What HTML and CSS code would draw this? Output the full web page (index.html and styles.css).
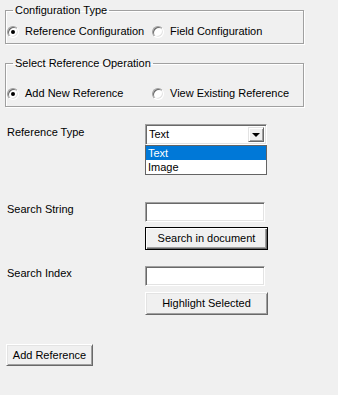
FILE: index.html
```html
<!DOCTYPE html>
<html lang="en">

<head>
    <link rel="stylesheet" href="styles.css">
</head>

<body>
    <fieldset class="group group-config">
        <legend>Configuration Type</legend>
        <div class="radio-row">
            <label class="radio-item wide"><span class="radio checked"></span>Reference Configuration</label>
            <label class="radio-item"><span class="radio"></span>Field Configuration</label>
        </div>
    </fieldset>

    <fieldset class="group group-operation">
        <legend>Select Reference Operation</legend>
        <div class="radio-row">
            <label class="radio-item wide"><span class="radio checked"></span>Add New Reference</label>
            <label class="radio-item"><span class="radio"></span>View Existing Reference</label>
        </div>
    </fieldset>

    <div class="form">
        <div class="form-row row-type">
            <span class="field-label">Reference Type</span>
            <div class="combo">
                <span class="combo-value">Text</span>
                <span class="combo-arrow"></span>
                <ul class="combo-list">
                    <li class="selected">Text</li>
                    <li>Image</li>
                </ul>
            </div>
        </div>

        <div class="form-row row-search">
            <span class="field-label">Search String</span>
            <div class="controls">
                <div class="textbox"></div>
                <button class="btn btn-default">Search in document</button>
            </div>
        </div>

        <div class="form-row row-index">
            <span class="field-label">Search Index</span>
            <div class="controls">
                <div class="textbox"></div>
                <button class="btn">Highlight Selected</button>
            </div>
        </div>

        <button class="btn btn-add">Add Reference</button>
    </div>
</body>

</html>
```

FILE: styles.css
```css
body {
    margin: 0;
    padding: 0;
    width: 338px;
    height: 395px;
    background-color: #f0f0f0;
    font-family: "Liberation Sans", Arial, sans-serif;
    font-size: 11px;
    line-height: 13px;
    color: #000;
    overflow: hidden;
}

.group {
    box-sizing: border-box;
    width: 299px;
    min-width: 0;
    margin: 0 0 0 5px;
    border: 1px solid #a0a0a0;
    box-shadow: 1px 1px 0 #fff, inset 1px 1px 0 #fff;
}

.group legend {
    margin-left: 6px;
    padding: 0 2px;
    line-height: 13px;
}

.group-config {
    margin-top: 4px;
    padding: 8px 0 5px 1px;
}

.group-operation {
    margin-top: 13px;
    padding: 17px 0 6px 1px;
}

.radio-row {
    display: flex;
}

.radio-item {
    display: flex;
    align-items: center;
    height: 13px;
}

.radio-item.wide {
    width: 145px;
}

.radio {
    position: relative;
    box-sizing: border-box;
    width: 12px;
    height: 12px;
    margin-right: 6px;
    border-radius: 50%;
    background-color: #fff;
    border: 1px solid;
    border-color: #a0a0a0 #fff #fff #a0a0a0;
    box-shadow: inset 1px 1px 0 #696969, inset -1px -1px 0 #e3e3e3;
}

.radio.checked::after {
    content: "";
    position: absolute;
    left: 3px;
    top: 3px;
    width: 4px;
    height: 4px;
    border-radius: 50%;
    background-color: #000;
}

.form {
    margin: 17px 0 0 7px;
}

.form-row {
    display: grid;
    grid-template-columns: 138px 123px;
}

.row-type .field-label {
    padding-top: 2px;
}

.row-search {
    margin-top: 57px;
}

.row-index {
    margin-top: 16px;
}

.row-search .field-label,
.row-index .field-label {
    padding-top: 1px;
}

.combo {
    position: relative;
    box-sizing: border-box;
    width: 122px;
    height: 21px;
    background-color: #fff;
    border: 1px solid;
    border-color: #a0a0a0 #fff #fff #a0a0a0;
    box-shadow: inset 1px 1px 0 #696969, inset -1px -1px 0 #e3e3e3;
}

.combo-value {
    display: block;
    padding: 3px 0 0 3px;
}

.combo-arrow {
    position: absolute;
    top: 2px;
    right: 2px;
    box-sizing: border-box;
    width: 16px;
    height: 15px;
    background-color: #f0f0f0;
    border: 1px solid;
    border-color: #e3e3e3 #696969 #696969 #e3e3e3;
    box-shadow: inset 1px 1px 0 #fff, inset -1px -1px 0 #a0a0a0;
}

.combo-arrow::after {
    content: "";
    position: absolute;
    left: 3px;
    top: 5px;
    border-left: 4px solid transparent;
    border-right: 4px solid transparent;
    border-top: 4px solid #000;
}

.combo-list {
    position: absolute;
    top: 20px;
    left: -1px;
    box-sizing: border-box;
    width: 122px;
    margin: 0;
    padding: 0;
    list-style: none;
    background-color: #fff;
    border: 1px solid #646464;
}

.combo-list li {
    height: 14px;
    padding-left: 2px;
    line-height: 14px;
}

.combo-list li.selected {
    background-color: #0078d7;
    color: #fff;
}

.controls {
    display: flex;
    flex-direction: column;
}

.textbox {
    box-sizing: border-box;
    width: 120px;
    height: 20px;
    background-color: #fff;
    border: 1px solid;
    border-color: #a0a0a0 #fff #fff #a0a0a0;
    box-shadow: inset 1px 1px 0 #696969, inset -1px -1px 0 #e3e3e3;
}

.btn {
    box-sizing: border-box;
    width: 123px;
    height: 23px;
    margin-top: 5px;
    padding: 0;
    font: inherit;
    color: #000;
    background-color: #f0f0f0;
    border: 1px solid;
    border-color: #fff #696969 #696969 #fff;
    box-shadow: inset 1px 1px 0 #e3e3e3, inset -1px -1px 0 #a0a0a0;
}

.row-index .btn {
    margin-top: 6px;
}

.btn-default {
    border: 1px solid #000;
    box-shadow: inset 1px 1px 0 #fff, inset -1px -1px 0 #696969, inset -2px -2px 0 #a0a0a0;
}

.btn-add {
    display: block;
    width: 87px;
    height: 22px;
    margin: 29px 0 0 -1px;
}
```
